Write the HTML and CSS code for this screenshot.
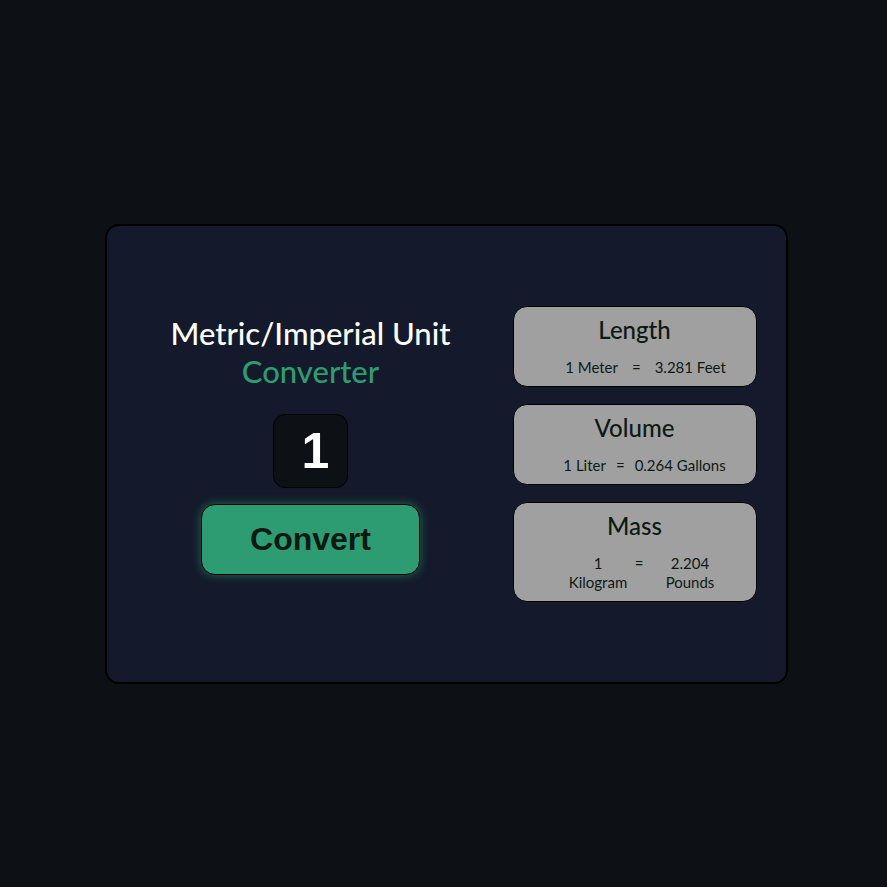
FILE: index.html
```html
<!DOCTYPE html>
<html lang="en">

<head>
    <meta charset="UTF-8">
    <meta name="viewport" content="width=device-width, initial-scale=1.0">
    <title>Unit Converter</title>
    <link rel="stylesheet" href="styles.css">
</head>

<body>
    <div class="card">
        <div class="left">
            <h1 class="title">Metric/Imperial Unit<br><span class="accent">Converter</span></h1>
            <div class="number">1</div>
            <button class="convert">Convert</button>
        </div>
        <div class="right">
            <div class="unit">
                <h2>Length</h2>
                <p class="row row-length"><span>1 Meter</span><span>=</span><span>3.281 Feet</span></p>
            </div>
            <div class="unit">
                <h2>Volume</h2>
                <p class="row row-volume"><span>1 Liter</span><span>=</span><span>0.264 Gallons</span></p>
            </div>
            <div class="unit unit-mass">
                <h2>Mass</h2>
                <p class="row row-mass"><span class="col">1<br>Kilogram</span><span class="eq">=</span><span class="col">2.204<br>Pounds</span></p>
            </div>
        </div>
    </div>
</body>

</html>
```

FILE: styles.css
```css
body {
    margin: 0;
    padding: 0;
    width: 100vw;
    height: 100vh;
    background: #0d1014;
    display: flex;
    align-items: center;
    justify-content: center;
    font-family: Lato, "Noto Sans", sans-serif;
}
.card {
    box-sizing: border-box;
    width: 683px;
    height: 460px;
    margin-top: 20px;
    margin-left: 5px;
    background: #141a2b;
    border: 2px solid #000;
    border-radius: 14px;
    display: flex;
    align-items: center;
    padding: 0 28px 0 30px;
    gap: 28px;
}
.left {
    width: 348px;
    display: flex;
    flex-direction: column;
    align-items: center;
    margin-top: -18px;
}
.title {
    margin: 0;
    text-align: center;
    color: #fff;
    font-size: 31px;
    font-weight: 500;
    line-height: 38px;
}
.accent {
    color: #2e9c70;
}
.number {
    margin-top: 24px;
    box-sizing: border-box;
    width: 75px;
    height: 74px;
    padding-left: 10px;
    background: #0d1014;
    border: 1px solid #000;
    border-radius: 12px;
    color: #fff;
    font-family: "Liberation Sans", Arial, sans-serif;
    font-weight: bold;
    font-size: 50px;
    display: flex;
    align-items: center;
    justify-content: center;
}
.convert {
    margin-top: 16px;
    width: 219px;
    height: 71px;
    background: #2e9c72;
    border: 1px solid #000;
    border-radius: 14px;
    box-shadow: 0 0 10px rgba(46, 156, 114, 0.6);
    color: #0a1a12;
    font-family: "Liberation Sans", Arial, sans-serif;
    font-weight: bold;
    font-size: 32px;
    cursor: pointer;
}
.right {
    width: 244px;
    display: flex;
    flex-direction: column;
    gap: 17px;
}
.unit {
    box-sizing: border-box;
    height: 81px;
    background: #a0a0a0;
    border: 1px solid #000;
    border-radius: 14px;
    text-align: center;
    color: #0d1a14;
    padding: 8px 8px 8px;
}
.unit-mass {
    height: 100px;
}
.unit h2 {
    margin: 0;
    font-size: 24px;
    font-weight: 500;
    line-height: 30px;
}
.row {
    margin: 13px 0 0;
    display: flex;
    justify-content: center;
    font-size: 15px;
    line-height: 19px;
}
.row-length {
    gap: 14px;
    padding-left: 22px;
}
.row-volume {
    gap: 10px;
    padding-left: 20px;
}
.row-mass {
    margin-top: 13px;
    padding-left: 24px;
}
.row-mass .eq {
    width: 14px;
}
.row-mass .col:first-child {
    width: 64px;
    margin-right: 2px;
}
.row-mass .col:last-child {
    width: 74px;
    margin-left: 7px;
}
```
